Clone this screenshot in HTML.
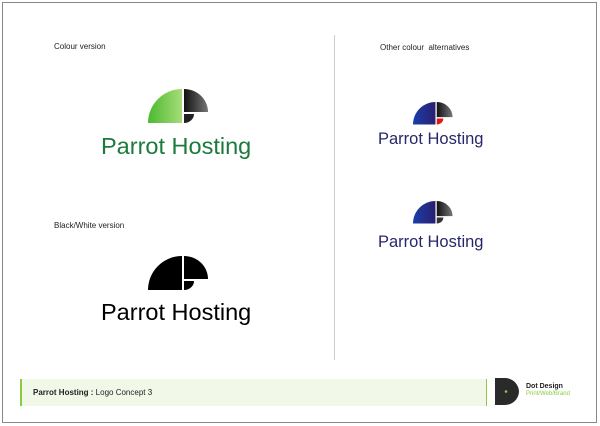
<!DOCTYPE html>
<html><head><style>
body{margin:0;width:600px;height:426px;background:#fff;position:relative;font-family:"Liberation Sans",sans-serif;overflow:hidden}
.frame{position:absolute;left:2px;top:2px;width:593px;height:419px;border:1px solid #888}
.t{position:absolute;white-space:nowrap}
</style></head><body>
<div class="frame"></div>
<svg width="600" height="426" style="position:absolute;left:0;top:0">
<defs>
<linearGradient id="g" x1="0" x2="1"><stop offset="0" stop-color="#4cb82e"/><stop offset="1" stop-color="#a6dd7a"/></linearGradient>
<linearGradient id="k" x1="0" x2="1"><stop offset="0" stop-color="#111"/><stop offset="1" stop-color="#777"/></linearGradient>
<linearGradient id="b" x1="0" x2="1"><stop offset="0" stop-color="#1a3fa8"/><stop offset="1" stop-color="#2a1f70"/></linearGradient>
</defs>
<line x1="334.5" y1="35" x2="334.5" y2="360" stroke="#ccc"/>
<g transform="translate(148,89)"><path d="M34 0 A34 34 0 0 0 0 34 L34 34 Z" fill="url(#g)"/><path d="M36 0 A24 23 0 0 1 60 23 L36 23 Z" fill="url(#k)"/><path d="M36 25 L46 25 A10 9 0 0 1 36 34 Z" fill="#222"/></g>
<g transform="translate(148,256)"><path d="M34 0 A34 34 0 0 0 0 34 L34 34 Z"/><path d="M36 0 A24 23 0 0 1 60 23 L36 23 Z"/><path d="M36 25 L46 25 A10 9 0 0 1 36 34 Z"/></g>
<g transform="translate(413,102) scale(0.66)"><path d="M34 0 A34 34 0 0 0 0 34 L34 34 Z" fill="url(#b)"/><path d="M36 0 A24 23 0 0 1 60 23 L36 23 Z" fill="url(#k)"/><path d="M36 25 L46 25 A10 9 0 0 1 36 34 Z" fill="#e01818"/></g>
<g transform="translate(413,201) scale(0.66)"><path d="M34 0 A34 34 0 0 0 0 34 L34 34 Z" fill="url(#b)"/><path d="M36 0 A24 23 0 0 1 60 23 L36 23 Z" fill="url(#k)"/><path d="M36 25 L46 25 A10 9 0 0 1 36 34 Z" fill="#333"/></g>
<path d="M495 378 L505 378 A14 14 0 0 1 519 392 A14 14 0 0 1 505 405 L495 405 Z" fill="#2a2a2a"/>
<circle cx="506" cy="391.5" r="1.3" fill="#8c4"/>
</svg>
<div class="t" style="left:54px;top:42px;font-size:8px;color:#222">Colour version</div>
<div class="t" style="left:54px;top:221px;font-size:8px;color:#222">Black/White version</div>
<div class="t" style="left:380px;top:43px;font-size:8px;color:#222">Other colour&nbsp; alternatives</div>
<div class="t" style="left:101px;top:133px;font-size:23.5px;color:#1b7a3c">Parrot Hosting</div>
<div class="t" style="left:101px;top:299px;font-size:23.5px;color:#000">Parrot Hosting</div>
<div class="t" style="left:378px;top:130px;font-size:16.5px;color:#27276b">Parrot Hosting</div>
<div class="t" style="left:378px;top:233px;font-size:16.5px;color:#27276b">Parrot Hosting</div>
<div style="position:absolute;left:20px;top:379px;width:464px;height:27px;background:#f1f8e8;border-left:2px solid #8c4;border-right:1px solid #8c4"></div>
<div class="t" style="left:33px;top:388px;font-size:8px;color:#222"><b>Parrot Hosting :</b> Logo Concept 3</div>
<div class="t" style="left:526px;top:383px;font-size:7px;color:#222;font-weight:bold">Dot Design</div>
<div class="t" style="left:526px;top:391px;font-size:6px;color:#8c4">Print/Web/Brand</div>
</body></html>
